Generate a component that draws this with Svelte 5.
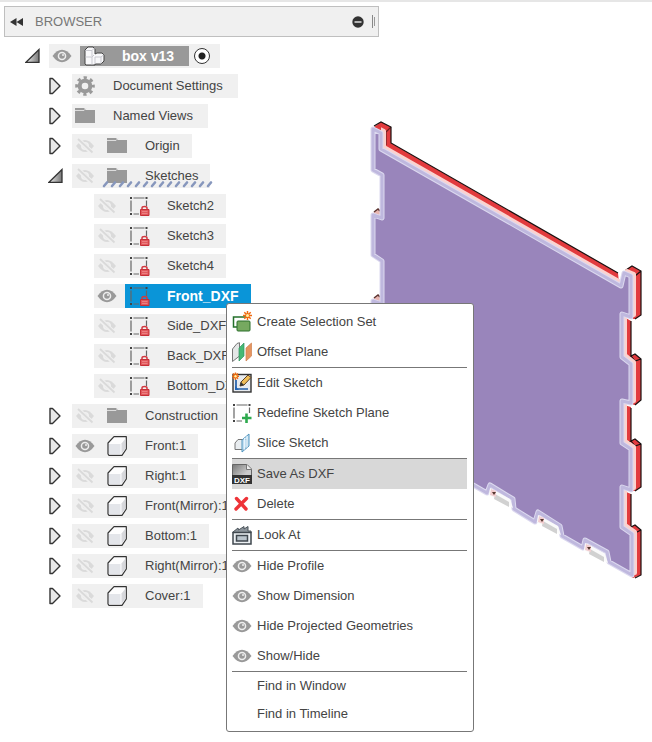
<script>
  const rows = [
    { name: 'box v13', level: 0, arrow: 'open', eye: 'on', icon: 'assembly', active: true },
    { name: 'Document Settings', level: 1, arrow: 'closed', icon: 'gear' },
    { name: 'Named Views', level: 1, arrow: 'closed', icon: 'folder' },
    { name: 'Origin', level: 1, arrow: 'closed', eye: 'off', icon: 'folder' },
    { name: 'Sketches', level: 1, arrow: 'open', eye: 'off', icon: 'folder', marked: true },
    { name: 'Sketch2', level: 2, eye: 'off', icon: 'sketch' },
    { name: 'Sketch3', level: 2, eye: 'off', icon: 'sketch' },
    { name: 'Sketch4', level: 2, eye: 'off', icon: 'sketch' },
    { name: 'Front_DXF', level: 2, eye: 'on', icon: 'sketch', selected: true },
    { name: 'Side_DXF', level: 2, eye: 'off', icon: 'sketch' },
    { name: 'Back_DXF', level: 2, eye: 'off', icon: 'sketch' },
    { name: 'Bottom_DXF', level: 2, eye: 'off', icon: 'sketch' },
    { name: 'Construction', level: 1, arrow: 'closed', eye: 'off', icon: 'folder' },
    { name: 'Front:1', level: 1, arrow: 'closed', eye: 'on', icon: 'body' },
    { name: 'Right:1', level: 1, arrow: 'closed', eye: 'off', icon: 'body' },
    { name: 'Front(Mirror):1', level: 1, arrow: 'closed', eye: 'off', icon: 'body' },
    { name: 'Bottom:1', level: 1, arrow: 'closed', eye: 'off', icon: 'body' },
    { name: 'Right(Mirror):1', level: 1, arrow: 'closed', eye: 'off', icon: 'body' },
    { name: 'Cover:1', level: 1, arrow: 'closed', eye: 'off', icon: 'body' }
  ];

  const groups = [
    [['Create Selection Set', 'set'], ['Offset Plane', 'offset']],
    [['Edit Sketch', 'edit'], ['Redefine Sketch Plane', 'redefine'], ['Slice Sketch', 'slice']],
    [['Save As DXF', 'dxf'], ['Delete', 'delete']],
    [['Look At', 'look']],
    [['Hide Profile', 'eye'], ['Show Dimension', 'eye'], ['Hide Projected Geometries', 'eye'], ['Show/Hide', 'eye']],
    [['Find in Window', ''], ['Find in Timeline', '']]
  ];

  const hovered = 'Save As DXF';
  const slots = [[0, 0], [48, 27], [95, 55]];
  const dashes = Array.from({ length: 14 }, (_, i) => i * 8);
  const face =
    'M373 129L381 133V149L621 286L624 273L631 276V317L622 314V357L631 364V403L622 401V443L631 449V490L622 487V527L632 534V575L609 562L607 552L585 540L583 548L562 536L560 526L538 512L535 522L514 509L513 499L490 485L487 493L373 427V301L382 304V261L373 255V215L382 218V175L373 170Z';
</script>

{#snippet icon(kind)}
  <svg class="icon" viewBox="0 0 20 20" width="20" height="20" aria-hidden="true">
    {#if kind === 'eye' || kind === 'on'}
      <path d="M.5 10Q5 3.8 10 3.8T19.500 10Q15 16.200 10 16.200T.5 10Z" fill="#999" />
      <circle cx="10" cy="10" r="4.300" fill="#eee" />
      <circle cx="10" cy="10" r="2.800" fill="#999" />
      <circle cx="11" cy="9" r="1" fill="#eee" />
    {:else if kind === 'off'}
      <path d="M1 10Q5.500 4 10 4T19 10Q14.500 16 10 16T1 10Z" fill="#dadada" />
      <circle cx="10" cy="10" r="4" fill="#f0f0f0" />
      <circle cx="10" cy="10" r="2.400" fill="#dadada" />
      <path d="M2 2.500L18 17.500" stroke="#f0f0f0" stroke-width="4.500" />
      <path d="M3 3L17.500 16.500" stroke="#dadada" stroke-width="1.800" />
    {:else if kind === 'assembly'}
      <path d="M1 4L4 1H9L11 3V8L13 7H18L20 9V15L17 18H11V19H2L1 18Z" fill="#f8f8fa" stroke="#444" />
      <path d="M1.500 4.500H8L10.500 2M8 4.500V10M1.500 11H8L10 9M11 11H17L19.500 9M17 11V17.500M11 11V18M8 11V18.500" fill="none" stroke="#c9c9d0" />
    {:else if kind === 'gear'}
      <circle cx="10" cy="10" r="5.300" fill="none" stroke="#999" stroke-width="4" />
      <circle cx="10" cy="10" r="8.300" fill="none" stroke="#999" stroke-width="3" stroke-dasharray="3.260 3.260" stroke-dashoffset="1.630" />
    {:else if kind === 'folder'}
      <path d="M0 2H9L11 4H20V17H0Z" fill="#999" />
      <path d="M0 4.500H9L11 2.500" fill="none" stroke="#ddd" stroke-width="1" />
    {:else if kind === 'sketch' || kind === 'redefine'}
      <path d="M4.500 2H15.500M2 4.500V15.500M17.500 4.500V10M4.500 18H10" stroke="#666" stroke-width="1.200" />
      <path d="M1 1h2v2H1zM16.500 1h2v2h-2zM1 17h2v2H1z" fill="#444" />
      {#if kind === 'sketch'}
        <path d="M13 14V12Q13 10.500 15.500 10.500T18 12V14" fill="none" stroke="#d33a40" stroke-width="1.500" />
        <path d="M11.500 13.500H20V19.500H11.500Z" fill="#e0585c" stroke="#c62f36" />
        <path d="M13 15.500H18.500M13 17.500H18.500" stroke="#f09090" stroke-width=".7" />
      {:else}
        <path d="M14.500 10.500V20M10 15H19.500" stroke="#2eaa4e" stroke-width="2.600" />
      {/if}
    {:else if kind === 'body'}
      <path d="M1 7L7 .7H19.300V13L15 19.300H2L1 18Z" fill="#fdfdfe" stroke="#333" stroke-width="1.200" stroke-linejoin="round" />
      <path d="M2 8H13.500V18.300H2Z" fill="#e3e5ea" />
      <path d="M14.500 7.500L18.500 2.500V12.500L14.500 18Z" fill="#d7d8dc" />
    {:else if kind === 'set'}
      <path d="M15 5H1.500V15H5" fill="none" stroke="#24702b" stroke-width="1.500" />
      <rect x="5" y="9" width="13" height="10" rx="1" fill="#76a960" stroke="#2b6e2b" />
      <path d="M15.500 -1V8M11 3.500H20M12.300 .3L18.700 6.700M18.700 .3L12.300 6.700" stroke="#f06a10" stroke-width="1.500" />
      <circle cx="15.500" cy="3.500" r="1.500" fill="#fff2a0" />
    {:else if kind === 'offset'}
      <path d="M.5 7L5 1.500L7.500 .7V14L.5 19.500Z" fill="#e4e7e7" stroke="#777" />
      <path d="M7 6L12 1V14L7 19Z" fill="#46b974" stroke="#329360" stroke-width=".7" />
      <path d="M14 6L19.500 1V14L14 19Z" fill="#e6945f" stroke="#cf804d" stroke-width=".7" />
    {:else if kind === 'edit'}
      <rect x="1" y="1.500" width="18" height="17.500" fill="#e8ebef" stroke="#333" stroke-width="1.400" />
      <path d="M4 7V16H16" fill="none" stroke="#225fa8" stroke-width="1.700" />
      <path d="M3 13V17H7Z" fill="#1f63b5" />
      <path d="M8 13L9 9L16 2L19 4.500L12 12Z" fill="#efbd58" stroke="#5c4125" />
      <path d="M8 13L9 9L12 12Z" fill="#333" />
      <path d="M3.500 -.5V7M0 3.200H7M1 .6L6 5.800M6 .6L1 5.800" stroke="#f06a10" stroke-width="1.400" />
      <circle cx="3.500" cy="3.200" r="1.200" fill="#fff2a0" />
    {:else if kind === 'slice'}
      <path d="M3 10L6 6.500H15V13L12 16.500H3Z" fill="#e9edf0" stroke="#777" />
      <path d="M10 7L17 1V13L10 19Z" fill="#b9dcf2" fill-opacity=".8" stroke="#5194bd" />
      <path d="M12.500 5V16.500M15 3V14.500" stroke="#e7f4fc" />
    {:else if kind === 'dxf'}
      <defs>
        <linearGradient id="sheet" x1="0" y1="0" x2="1" y2="1"><stop offset="0" stop-color="#777" /><stop offset=".6" stop-color="#ccc" /></linearGradient>
      </defs>
      <path d="M.5 .5H15L19.500 5V19.500H.5Z" fill="url(#sheet)" stroke="#666" />
      <path d="M14.500 .5V5.500H19.500" fill="#eee" stroke="#777" />
      <rect y="11" width="20" height="9" fill="#333" />
      <text x="10" y="18.500" text-anchor="middle" font-size="8" font-weight="bold" fill="#fff">DXF</text>
    {:else if kind === 'delete'}
      <path d="M4.500 4.500L14 15M14.500 4.500L4 15" stroke="#ee3338" stroke-width="3.400" stroke-linecap="round" />
    {:else if kind === 'look'}
      <path d="M1 7L6 3L6.500 5L12 1.500V4L16 1.500V6H19V8H1Z" fill="#8c949b" stroke="#4b545b" />
      <rect x="1" y="7.500" width="18" height="11.500" fill="#edf1f4" stroke="#3f474e" stroke-width="1.500" />
      <rect x="4.500" y="10.500" width="11" height="5.500" fill="#bac4cc" stroke="#3f474e" stroke-width="1.500" />
    {/if}
  </svg>
{/snippet}

<main>
  <svg class="scene" viewBox="0 0 652 742" width="652" height="742" role="img" aria-label="Front panel of the box">
    <g fill="#e23b3e">
      <path d="M374 127L381 122L391 127V143L618 273L619 283L381 146Z" />
      <path d="M625 270L632 266L641 271V315L635 319H631V275Z" />
      <path d="M624 317L631 321V356L635 354L641 359V400L635 405L630 404V366L624 360Z" />
      <path d="M624 405L631 407V441L635 439L641 444V487L635 491L630 490V451L624 445Z" />
      <path d="M624 491L631 494V527L635 525L641 530V575L633 578L630 575V534L624 529Z" />
    </g>
    <g fill="none" stroke="#1a1010" stroke-width="1.200">
      <path d="M374 126L381 122L391 127V143L618 273" />
      <path d="M386 132L391 127M386 132V145" stroke-opacity=".6" />
      <path d="M626 270L632 266L641 271V315L635 319M635 276L641 271" />
      <path d="M631 321V356L635 354L641 359V400L635 405M626 358L631 356L635 361L641 359" />
      <path d="M631 408V441L635 439L641 444V487L635 491M626 443L631 441L635 446L641 444" />
      <path d="M631 494V527L635 525L641 530V575L635 578M626 529L631 527L635 533L641 530" />
    </g>
    <g fill="#e8b5b0"><path d="M372 214L378 209L382 211V218Z" /><path d="M372 300L378 295L382 297V304Z" /></g>
    <path d="M374 212L378 209L380 211M374 298L378 295L380 297" fill="none" stroke="#5c3430" stroke-width="1.500" />
    <clipPath id="upper"><path d="M381 120H640V576H619V292L381 155Z" /></clipPath>
    <g clip-path="url(#upper)">
      <path d={face} transform="translate(3 -2)" fill="none" stroke="#fad2cf" stroke-width="4" stroke-linejoin="round" />
    </g>
    <path d={face} fill="#9985bb" stroke="#dcd9ef" stroke-width="5" stroke-linejoin="round" />
    <path d={face} fill="none" stroke="#bfb8de" stroke-width="3" stroke-linejoin="round" />
    {#each slots as [x, y]}
      <g transform="translate({x} {y})">
        <path d="M490 488L510 499L513 508L489 495Z" fill="#fafafa" />
        <path d="M495 494L509 502V507L494 499Z" fill="#d1d1d1" />
        <path d="M491 489L496 491V497L490 495Z" fill="#f2cdcf" />
        <path d="M492 492L496 492L494 495Z" fill="#56362f" />
      </g>
    {/each}
  </svg>

  <section class="browser">
    <header>
      <button class="collapse" aria-label="Collapse browser">
        <svg width="13" height="8" viewBox="0 0 13 8"><path d="M6.500 0V8L0 4ZM13 0V8L6.500 4Z" fill="#333" /></svg>
      </button>
      <h1>BROWSER</h1>
      <button class="minus" aria-label="Hide panel">
        <svg width="12" height="12" viewBox="0 0 12 12"><circle cx="6" cy="6" r="5.700" fill="#333" /><path d="M2.500 6H9.500" stroke="#eee" stroke-width="1.400" /></svg>
      </button>
      <span class="grip"></span>
    </header>

    <ul class="tree">
      {#each rows as row}
        <li class="row level{row.level}">
          {#if row.arrow}
            <button class="arrow" aria-label="Toggle {row.name}" aria-expanded={row.arrow === 'open'}>
              {#if row.arrow === 'open'}
                <svg width="16" height="16" viewBox="0 0 16 16">
                  <defs><linearGradient id="wedge"><stop offset="0" stop-color="#eee" /><stop offset="1" stop-color="#777" /></linearGradient></defs>
                  <path d="M1 14.300L14 1.500V14.300Z" fill="url(#wedge)" stroke="#333" stroke-width="1.300" />
                </svg>
              {:else}
                <svg width="14" height="18" viewBox="0 0 14 18"><path d="M2 1.500H4.500L12 9L4.500 16.500H2Z" fill="#e8e8e8" stroke="#333" stroke-width="1.400" stroke-linejoin="round" /></svg>
              {/if}
            </button>
          {/if}
          <div class="chip">
            {#if row.eye}
              <button class="eye" aria-label="Visibility of {row.name}">{@render icon(row.eye)}</button>
            {/if}
            <span class="label" class:bare={!row.eye} class:active={row.active} class:selected={row.selected}>
              {@render icon(row.icon)}
              <span>{row.name}</span>
            </span>
            {#if row.active}
              <label class="activate"><input type="radio" name="active" checked aria-label="Activate {row.name}" /></label>
            {/if}
            {#if row.marked}
              <svg class="squiggle" width="112" height="8" viewBox="0 0 112 8" aria-hidden="true">
                {#each dashes as x}
                  <path d="M{x + 2} 6L{x + 5} 2.500" stroke="#8797bd" stroke-width="2.600" stroke-linecap="round" />
                {/each}
              </svg>
            {/if}
          </div>
        </li>
      {/each}
    </ul>
  </section>

  <div class="menu" role="menu">
    {#each groups as group}
      <div class="group">
        {#each group as [name, kind]}
          <button role="menuitem" class:plain={!kind} class:hovered={name === hovered}>
            {@render icon(kind)}
            <span>{name}</span>
          </button>
        {/each}
      </div>
    {/each}
  </div>
</main>

<style>
  main {
    position: relative;
    min-height: 100vh;
    box-sizing: border-box;
    overflow: hidden;
    border-top: 2px solid #e6e6e6;
    background: #fff;
    color: #444;
    font: 13px/20px "Liberation Sans", Arial, sans-serif;
  }
  button {
    margin: 0;
    padding: 0;
    border: 0;
    background: none;
    color: inherit;
    font: inherit;
  }
  svg {
    display: block;
    flex: none;
  }
  .icon {
    overflow: visible;
  }
  .scene {
    position: absolute;
    top: -2px;
    left: 0;
  }
  .browser {
    position: relative;
    width: 375px;
    max-width: 100%;
    padding: 4px 0 0 4px;
  }
  header {
    display: flex;
    align-items: center;
    height: 31px;
    box-sizing: border-box;
    padding: 0 2px 0 5px;
    border: 1px solid #bfbfbf;
    background: #f0f0f0;
  }
  h1 {
    flex: 1;
    margin: 0 0 0 12px;
    color: #777;
    font-size: 13px;
    font-weight: normal;
  }
  .grip {
    width: 1px;
    height: 9px;
    margin-left: 8px;
    padding: 2px 1px;
    border-left: 1px solid #888;
    background: #999 content-box;
  }
  .tree {
    display: grid;
    gap: 6px;
    margin: 7px 0 0 -4px;
    padding: 0;
    list-style: none;
  }
  .row {
    display: flex;
    height: 24px;
  }
  .level0 {
    padding-left: 25px;
  }
  .level1 {
    padding-left: 48px;
  }
  .level2 {
    padding-left: 94px;
  }
  .arrow {
    display: flex;
    align-items: center;
    width: 24px;
  }
  .chip {
    position: relative;
    display: flex;
    align-items: center;
    background: #f0f0f0;
    white-space: nowrap;
  }
  .eye {
    display: grid;
    place-items: center;
    width: 26px;
    height: 24px;
  }
  .label {
    display: flex;
    align-items: center;
    gap: 18px;
    height: 24px;
    margin-left: 5px;
    padding: 0 12px 0 4px;
  }
  .bare {
    margin-left: 0;
    padding-left: 3px;
    padding-right: 15px;
  }
  .active,
  .selected {
    color: #fff;
    font-size: 14px;
    font-weight: bold;
  }
  .active {
    height: 20px;
    padding-right: 15px;
    background: #999;
  }
  .selected {
    background: #0a95d8;
  }
  .activate {
    display: flex;
    padding: 0 10px 0 5px;
  }
  input {
    appearance: none;
    width: 16px;
    height: 16px;
    margin: 0;
    border: 1px solid #333;
    border-radius: 50%;
    background: radial-gradient(circle, #222 0 3px, #fff 4px);
  }
  .squiggle {
    position: absolute;
    left: 30px;
    bottom: 0;
  }
  .menu {
    position: absolute;
    top: 301px;
    left: 226px;
    width: 248px;
    box-sizing: border-box;
    padding: 3px 6px 3px 5px;
    border: 1px solid #777;
    border-radius: 3px;
    background: #fff;
  }
  .group + .group {
    border-top: 1px solid #777;
  }
  .menu button {
    display: flex;
    align-items: center;
    gap: 5px;
    width: 100%;
    height: 30px;
    text-align: left;
    white-space: nowrap;
  }
  .menu .plain {
    height: 28px;
  }
  .menu .hovered {
    background: #d8d8d8;
  }
</style>
